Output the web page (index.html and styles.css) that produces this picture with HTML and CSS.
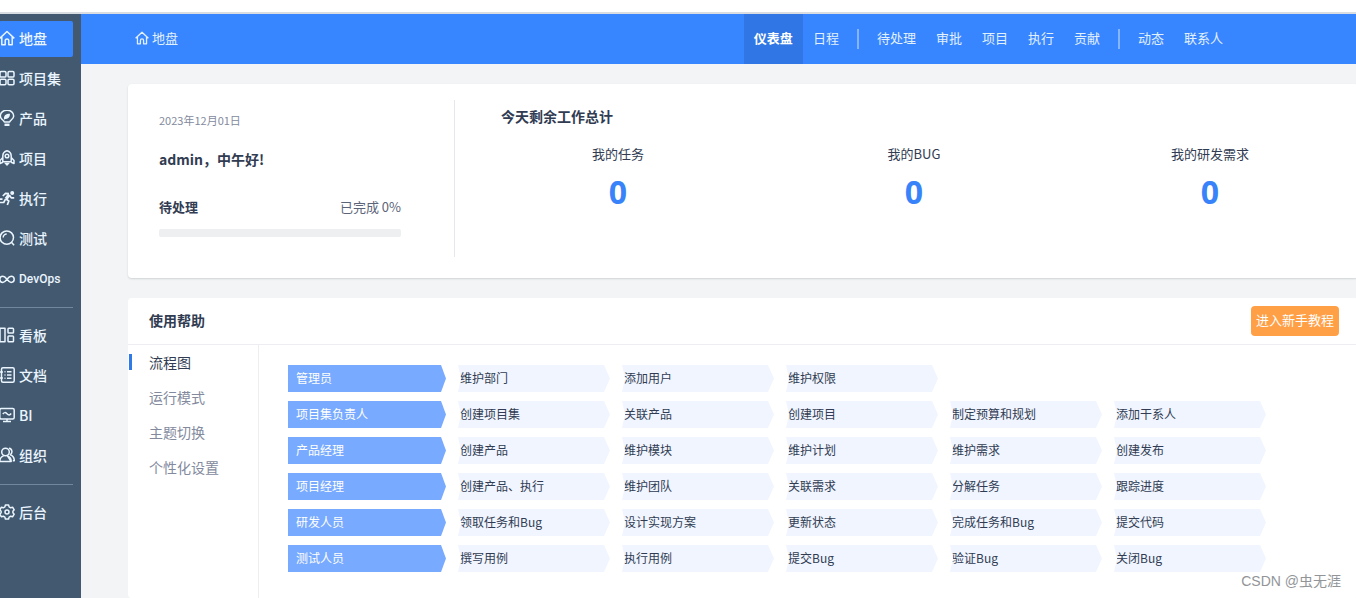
FILE: index.html
```html
<!DOCTYPE html>
<html lang="zh-CN">
<head>
<meta charset="utf-8">
<title>地盘</title>
<link rel="stylesheet" href="styles.css">
</head>
<body>
<svg class="defs" aria-hidden="true">
  <symbol id="i-home" viewBox="0 0 16 16"><path d="M.7 8.400 8 1.500l7.300 6.900M2.800 6.800v7.900h3.400v-3.900a1.800 1.800 0 0 1 3.600 0v3.900h3.400V6.800"/></symbol>
</svg>
<div class="app">
  <nav class="sidebar" aria-label="主导航">
    <a class="side-item active" href="#"><svg class="icon"><use href="#i-home"/></svg>地盘</a>
    <a class="side-item" href="#"><svg class="icon" viewBox="0 0 16 16"><rect x="1" y="1.500" width="6" height="5.600" rx="1.200"/><rect x="9" y="1.500" width="6" height="5.600" rx="1.200"/><rect x="1" y="9.200" width="6" height="5.600" rx="1.200"/><rect x="9" y="9.200" width="6" height="5.600" rx="1.200"/></svg>项目集</a>
    <a class="side-item" href="#"><svg class="icon" viewBox="0 0 16 16"><path d="M5.300 12C5 10.200 1.300 9.300 1.300 5.900a6.700 5.700 0 0 1 13.400 0c0 3.400-3.700 4.300-4 6.100z"/><path class="solid" d="M5 9c-.4-3.500 2-5.300 6-5.200C11 7.400 9 9.500 5.800 8.900L5 10z"/><path d="M5.500 14.800h5" stroke-width="2.400"/></svg>产品</a>
    <a class="side-item" href="#"><svg class="icon" viewBox="0 0 16 16"><path d="M3.800 11.800V6C3.800 3.500 5.800 1.400 8 .8c2.200.6 4.200 2.700 4.200 5.200v5.800zM3.800 7.500l-2.800 3v3l2.800-1.300M12.200 7.500l2.800 3v3l-2.800-1.300"/><circle cx="8" cy="6" r="1.800"/><path class="solid" d="M5 12.800h6L8 16z"/></svg>项目</a>
    <a class="side-item" href="#"><svg class="icon" viewBox="0 0 16 16"><circle class="solid" cx="13.200" cy="3" r="2"/><path d="M10.300 4.500 7 9" stroke-width="3.200"/><path d="M10 3.600 6.500 3.300 3.800 6M10.500 5.500l1.700 2.300h3M7 9l2.800 2-1.500 4M6.500 9.200l-1.800 3.300H1M0 9.200h3.500" stroke-width="1.700"/></svg>执行</a>
    <a class="side-item" href="#"><svg class="icon" viewBox="0 0 16 16"><circle cx="7.800" cy="7.600" r="6.700"/><path d="M4.200 7.600a3.500 3.500 0 0 1 3.500-3.500M12.400 12.300l2.700 3"/></svg>测试</a>
    <a class="side-item devops" href="#"><svg class="icon" viewBox="0 0 16 16"><path d="M8 8.300C6.500 6.300 5.400 5.200 3.900 5.200a3.100 3.100 0 0 0 0 6.200c1.500 0 2.600-1.100 4.100-3.100s2.600-3.100 4.100-3.100a3.100 3.100 0 0 1 0 6.200c-1.500 0-2.600-1.100-4.100-3.100z"/></svg>DevOps</a>
    <hr class="side-line">
    <a class="side-item" href="#"><svg class="icon" viewBox="0 0 16 16"><rect x="1" y="1.200" width="5" height="13.600"/><rect x="9" y="1.200" width="5.500" height="4.800" rx=".8"/><rect x="9" y="9" width="5.500" height="5.800" rx=".8"/></svg>看板</a>
    <a class="side-item" href="#"><svg class="icon" viewBox="0 0 16 16"><rect x="2.500" y=".8" width="12.700" height="14.400" rx="1.500"/><path d="M5.500 4.800h1M8 4.800h4.500M5.500 8h1M8 8h4.500M5.500 11.300h1M8 11.300h4.500M0 5h4M0 11h4"/></svg>文档</a>
    <a class="side-item" href="#"><svg class="icon" viewBox="0 0 16 16"><rect x=".8" y="1.500" width="14.400" height="10.500" rx="1.500"/><path d="M3.800 7c1.400-1.800 2.700-1.800 4.200-.2s2.800 1.500 4.200-.2M8 12v2M4 14.600h8"/></svg>BI</a>
    <a class="side-item" href="#"><svg class="icon" viewBox="0 0 16 16"><circle cx="6.500" cy="5" r="3.800"/><path d="M.8 14.500c0-3.200 1.500-4.800 3.800-5.600M8.400 8.900c2.300.8 3.800 2.400 3.800 5.600zM.8 14.500h11.400M10 1.300c3.400.4 3.800 4.800 1.300 6.400 2.500 1 4 2.800 4 6h-1.500"/></svg>组织</a>
    <hr class="side-line">
    <a class="side-item" href="#"><svg class="icon" viewBox="0 0 16 16"><path d="m6.400.9-.5 2-1.600.9-1.900-.6L.8 5.800l1.300 1.400v1.600L.8 10.200l1.600 2.600 1.900-.6 1.600.9.500 2h3.200l.5-2 1.600-.9 1.900.6 1.600-2.600-1.300-1.400V7.200l1.300-1.400-1.600-2.600-1.900.6-1.600-.9-.5-2z"/><circle cx="8" cy="8" r="2"/></svg>后台</a>
  </nav>
  <div class="page">
    <header class="topbar">
      <a class="crumb" href="#"><svg class="icon"><use href="#i-home"/></svg>地盘</a>
      <nav class="tabs" aria-label="地盘导航">
        <a class="tab active" href="#">仪表盘</a>
        <a class="tab" href="#">日程</a>
        <span class="tab-sep"></span>
        <a class="tab" href="#">待处理</a>
        <a class="tab" href="#">审批</a>
        <a class="tab" href="#">项目</a>
        <a class="tab" href="#">执行</a>
        <a class="tab" href="#">贡献</a>
        <span class="tab-sep"></span>
        <a class="tab" href="#">动态</a>
        <a class="tab" href="#">联系人</a>
      </nav>
    </header>
    <main class="content">
      <section class="card welcome">
        <div class="greet">
          <time class="date" datetime="2023-12-01">2023年12月01日</time>
          <h2 class="hello">admin，中午好!</h2>
          <div class="todo"><strong>待处理</strong><span>已完成 0%</span></div>
          <div class="bar" role="progressbar" aria-label="已完成" aria-valuenow="0"></div>
        </div>
        <div class="summary">
          <h2 class="summary-title">今天剩余工作总计</h2>
          <dl class="stats">
            <div><dt>我的任务</dt><dd>0</dd></div>
            <div><dt>我的BUG</dt><dd>0</dd></div>
            <div><dt>我的研发需求</dt><dd>0</dd></div>
          </dl>
        </div>
      </section>
      <section class="card help">
        <header class="help-head">
          <h2 class="help-title">使用帮助</h2>
          <button class="guide" type="button">进入新手教程</button>
        </header>
        <div class="help-body">
          <nav class="help-nav" aria-label="使用帮助">
            <a class="help-link active" href="#">流程图</a>
            <a class="help-link" href="#">运行模式</a>
            <a class="help-link" href="#">主题切换</a>
            <a class="help-link" href="#">个性化设置</a>
          </nav>
          <div class="flow">
            <ul class="row"><li class="role">管理员</li><li>维护部门</li><li>添加用户</li><li>维护权限</li></ul>
            <ul class="row"><li class="role">项目集负责人</li><li>创建项目集</li><li>关联产品</li><li>创建项目</li><li>制定预算和规划</li><li>添加干系人</li></ul>
            <ul class="row"><li class="role">产品经理</li><li>创建产品</li><li>维护模块</li><li>维护计划</li><li>维护需求</li><li>创建发布</li></ul>
            <ul class="row"><li class="role">项目经理</li><li>创建产品、执行</li><li>维护团队</li><li>关联需求</li><li>分解任务</li><li>跟踪进度</li></ul>
            <ul class="row"><li class="role">研发人员</li><li>领取任务和Bug</li><li>设计实现方案</li><li>更新状态</li><li>完成任务和Bug</li><li>提交代码</li></ul>
            <ul class="row"><li class="role">测试人员</li><li>撰写用例</li><li>执行用例</li><li>提交Bug</li><li>验证Bug</li><li>关闭Bug</li></ul>
          </div>
        </div>
      </section>
    </main>
  </div>
</div>
<div class="credit">CSDN @虫无涯</div>
</body>
</html>
```
FILE: styles.css
```css
* { box-sizing: border-box; }
body {
  margin: 0;
  min-height: 100vh;
  padding-top: 12px;
  display: flex;
  flex-direction: column;
  overflow: hidden;
  background: #fff;
  color: #313c52;
  font: 13px/20px "Noto Sans CJK SC", sans-serif;
}
a { color: inherit; text-decoration: none; }
h2, dl, dd, ul { margin: 0; padding: 0; }
.defs { position: absolute; width: 0; height: 0; }
.icon {
  flex: none;
  width: 16px;
  height: 16px;
  fill: none;
  stroke: currentColor;
  stroke-width: 1.5;
  stroke-linejoin: round;
}
.icon .solid { fill: currentColor; stroke: none; }

.app { flex: 1; display: flex; border-top: 2px solid #d9dde1; }

.sidebar {
  flex: none;
  width: 81px;
  padding: 7px 8px 0 0;
  display: flex;
  flex-direction: column;
  gap: 4px;
  background: #42596f;
  color: #eaf5ff;
  font-size: 14px;
  font-weight: 500;
}
.side-item {
  height: 36px;
  margin-left: -1px;
  padding-bottom: 2px;
  display: flex;
  align-items: center;
  gap: 4px;
  border-radius: 2px;
}
.side-item.active { background: #3785ff; }
.devops { padding-bottom: 0; font-family: "Liberation Sans Narrow", Roboto, sans-serif; font-size: 12px; }
.side-line { width: 100%; height: 1px; margin: 6px 0; border: 0; background: #71889c; }

.page { flex: 1; min-width: 0; display: flex; flex-direction: column; background: #f2f4f5; }
.topbar {
  height: 50px;
  padding: 0 123px 0 54px;
  display: flex;
  justify-content: space-between;
  background: #3785ff;
  color: #e2f1ff;
}
.crumb { display: flex; align-items: center; gap: 3px; padding-bottom: 2px; }
.crumb .icon { width: 14px; height: 14px; }
.tabs { display: flex; align-items: center; }
.tab { height: 50px; padding: 0 10px; line-height: 47px; }
.tab.active { background: #3077e5; color: #fff; font-weight: 700; }
.tab-sep { width: 2px; height: 20px; margin: 0 8px; background: #85b5ff; }

.content {
  flex: 1;
  padding: 20px 0 0 47px;
  display: flex;
  flex-direction: column;
  gap: 20px;
}
.card {
  margin-right: -2px;
  border-radius: 4px;
  background: #fff;
  box-shadow: 0 1px 2px rgba(40, 50, 60, .16);
}
.welcome { display: flex; padding: 16px 0 21px; }
.greet { flex: none; width: 327px; padding: 10px 53px 20px 31px; border-right: 1px solid #e5e7ec; }
.date { display: block; color: #838a9d; font-size: 11px; }
.hello { margin-top: 18px; font-size: 14px; line-height: 22px; }
.todo { display: flex; justify-content: space-between; margin-top: 27px; color: #5b6478; }
.todo strong { color: #313c52; }
.bar { height: 8px; margin-top: 12px; border-radius: 2px; background: #eeeff0; }
.summary { flex: 1; padding: 6px 0 0 15px; }
.summary-title { margin-left: 31px; font-size: 14px; line-height: 20px; }
.stats { display: grid; grid-template-columns: repeat(3, 1fr); margin-top: 18px; text-align: center; }
.stats dd { margin-top: 8px; color: #3883fa; font: 700 32px/40px "Noto Sans", sans-serif; }

.help { flex: 1; display: flex; flex-direction: column; box-shadow: none; }
.help-head {
  height: 47px;
  padding: 0 19px 0 21px;
  display: flex;
  align-items: center;
  justify-content: space-between;
  border-bottom: 1px solid #eceef1;
}
.help-title { padding-bottom: 2px; font-size: 14px; }
.guide {
  height: 30px;
  padding: 0 5px 2px;
  border: 0;
  border-radius: 4px;
  background: #ff9f46;
  color: #fff;
  font: inherit;
}
.help-body { flex: 1; display: flex; }
.help-nav { flex: none; width: 131px; padding-left: 1px; border-right: 1px solid #eceef1; color: #838a9d; font-size: 14px; }
.help-link { height: 35px; display: flex; align-items: center; padding: 0 0 2px 20px; }
.help-link.active { padding-left: 0; color: #313c52; }
.help-link.active::before { content: ""; width: 3px; height: 16px; margin-right: 17px; background: #2f7ae6; }
.flow { flex: 1; padding: 20px 92px 26px 29px; display: flex; flex-direction: column; gap: 9px; font-size: 12px; }
.row { display: grid; grid-template-columns: 158fr repeat(5, 152fr); gap: 12px; list-style: none; }
.row li {
  height: 27px;
  padding-left: 2px;
  line-height: 25px;
  background: #f0f5ff;
  clip-path: polygon(0 0, calc(100% - 6px) 0, 100% 50%, calc(100% - 6px) 100%, 0 100%, 3px 50%);
}
.row .role {
  padding-left: 8px;
  background: #78aaff;
  color: #fff;
  clip-path: polygon(0 0, calc(100% - 5px) 0, 100% 50%, calc(100% - 5px) 100%, 0 100%);
}
.credit {
  position: absolute;
  right: 15px;
  bottom: 7px;
  color: #929598;
  font: 14px/20px "Liberation Sans", "Noto Sans CJK SC", sans-serif;
}
```
